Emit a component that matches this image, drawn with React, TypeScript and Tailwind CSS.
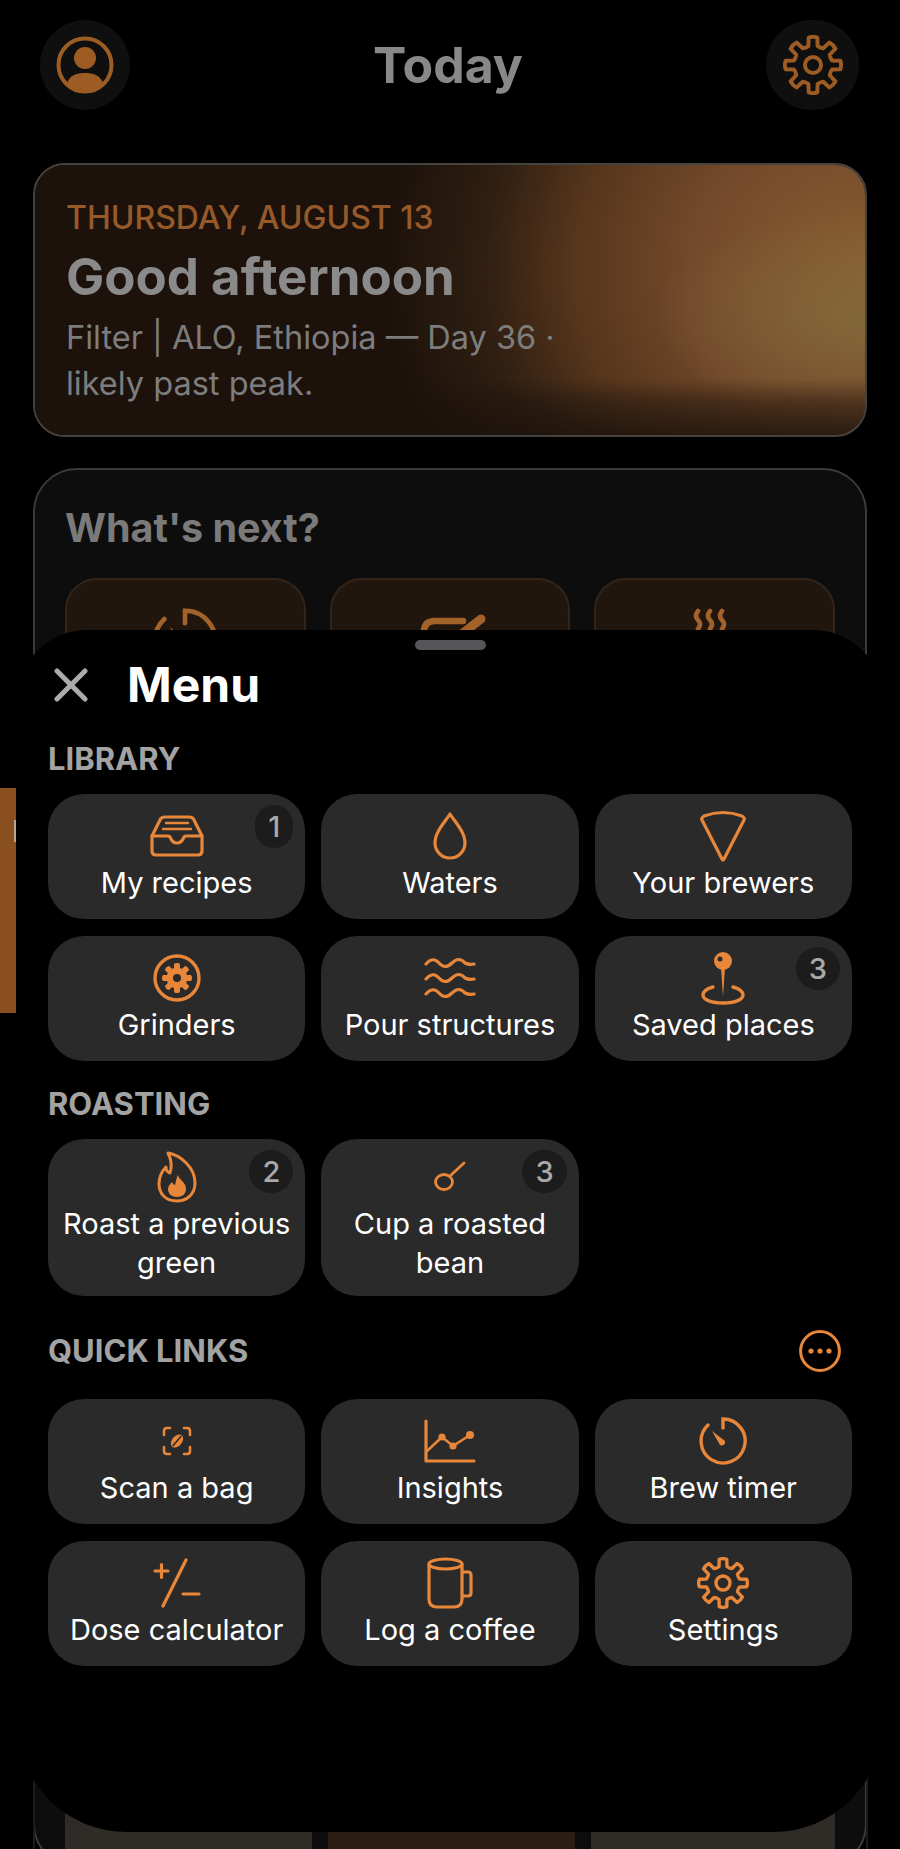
import React from 'react';

const ORANGE = '#e8873a';

// cog outline shared by the header and the Settings tile
const gearPath = (c: number, outer: number, inner: number, teeth: number) => {
  const pts: string[] = [];
  const step = (Math.PI * 2) / teeth;
  const at = (r: number, a: number) => `${(c + r * Math.sin(a)).toFixed(2)} ${(c - r * Math.cos(a)).toFixed(2)}`;
  for (let i = 0; i < teeth; i++) {
    const a = i * step;
    const w = step * 0.2;
    const v = step * 0.3;
    pts.push(`${i === 0 ? 'M' : 'L'}${at(inner, a - v)}`);
    pts.push(`L${at(outer, a - w)}`);
    pts.push(`Q${at(outer + 1, a)} ${at(outer, a + w)}`);
    pts.push(`L${at(inner, a + v)}`);
    pts.push(`Q${at(inner - 1, a + step / 2)} ${at(inner, a + step - v)}`);
  }
  return pts.join(' ') + 'Z';
};

const Gear = ({ color = ORANGE, size = 52 }: { color?: string; size?: number }) => (
  <svg width={size} height={size} viewBox="0 0 52 52" fill="none" stroke={color} strokeWidth="3.4" strokeLinejoin="round">
    <path d={gearPath(26, 24, 17, 8)} />
    <circle cx="26" cy="26" r="7" />
  </svg>
);

const Inbox = () => (
  <svg width="56" height="42" viewBox="0 0 56 42" fill="none" stroke={ORANGE} strokeWidth="3.2" strokeLinejoin="round" strokeLinecap="round">
    <path d="M3 21 L11 5 Q12 2 16 2 H40 Q44 2 45 5 L53 21 V36 Q53 40 49 40 H7 Q3 40 3 36Z" />
    <path d="M3 21 H19 Q21 21 22 24 Q24 28 28 28 Q32 28 34 24 Q35 21 37 21 H53" />
    <path d="M17 8 H39 M14 14 H42" strokeWidth="2.4" />
  </svg>
);

const Drop = () => (
  <svg width="34" height="48" viewBox="0 0 34 48" fill="none" stroke={ORANGE} strokeWidth="3.2" strokeLinejoin="round">
    <path d="M17 2 C12 10 2 20 2 31 A15 15 0 0 0 32 31 C32 20 22 10 17 2Z" />
  </svg>
);

const Cone = () => (
  <svg width="48" height="52" viewBox="0 0 48 52" fill="none" stroke={ORANGE} strokeWidth="3.2" strokeLinejoin="round">
    <path d="M3 10 Q2 8 5 6 Q24 -1 43 6 Q46 8 45 10 L25 49 Q24 51 23 49Z" />
  </svg>
);

const Waves = () => (
  <svg width="52" height="42" viewBox="0 0 52 42" fill="none" stroke={ORANGE} strokeWidth="3.2" strokeLinecap="round">
    <path d="M2 7 Q9 -1 15 6 T28 6 T41 6 Q45 8 50 7" />
    <path d="M2 22 Q9 14 15 21 T28 21 T41 21 Q45 23 50 22" />
    <path d="M2 37 Q9 29 15 36 T28 36 T41 36 Q45 38 50 37" />
  </svg>
);

const Pin = () => (
  <svg width="46" height="54" viewBox="0 0 46 54" fill="none">
    <path d="M13 36 C6 38 3 41 3 44 C3 49 12 52 23 52 C34 52 43 49 43 44 C43 41 40 38 33 36" stroke={ORANGE} strokeWidth="3.4" strokeLinecap="round" />
    <path d="M21 16 L23 46 L25 16Z" fill={ORANGE} />
    <circle cx="23" cy="10" r="9" fill={ORANGE} />
    <circle cx="20" cy="8" r="2.5" fill="#2a2a2a" />
  </svg>
);

const Grinder = () => (
  <svg width="48" height="48" viewBox="0 0 48 48" fill="none">
    <circle cx="24" cy="24" r="22" stroke={ORANGE} strokeWidth="3.4" />
    <path d={gearPath(24, 14, 10, 8)} fill={ORANGE} stroke={ORANGE} strokeWidth="1.4" strokeLinejoin="round" />
    <circle cx="24" cy="24" r="4" fill="#2a2a2a" />
  </svg>
);

const Flame = () => (
  <svg width="42" height="52" viewBox="0 0 42 52" fill="none">
    <path d="M12 2 C24 4 39 16 39 32 C39 43 31 50 21 50 C10 50 3 43 3 33 C3 26 6 20 10 16 C10 19 11 21 14 22 C16 16 15 8 12 2Z" stroke={ORANGE} strokeWidth="3" strokeLinejoin="round" />
    <path d="M22 24 C23 29 30 31 30 38 C30 43 26 46 21 46 C16 46 12 43 12 38 C12 35 14 33 16 31 C17 33 18 34 19 34 C20 31 20 27 22 24Z" fill={ORANGE} />
  </svg>
);

const Spoon = () => (
  <svg width="34" height="32" viewBox="0 0 34 32" fill="none" stroke={ORANGE} strokeWidth="2.8" strokeLinecap="round">
    <ellipse cx="11" cy="21" rx="8.5" ry="7.5" />
    <path d="M17 15 L31 2" />
  </svg>
);

const Scan = () => (
  <svg width="30" height="30" viewBox="0 0 30 30" fill="none" stroke={ORANGE} strokeWidth="2.6" strokeLinecap="round">
    <path d="M2 9 V5 Q2 2 5 2 H8 M22 2 H25 Q28 2 28 5 V9 M28 21 V25 Q28 28 25 28 H22 M8 28 H5 Q2 28 2 25 V21" />
    <g transform="rotate(40 15 15)">
      <ellipse cx="15" cy="15" rx="5" ry="7.5" fill={ORANGE} stroke="none" />
      <path d="M15 9 V21" stroke="#2a2a2a" strokeWidth="1.6" />
    </g>
  </svg>
);

const Chart = () => (
  <svg width="52" height="44" viewBox="0 0 52 44" fill="none" stroke={ORANGE} strokeWidth="3.2" strokeLinecap="round" strokeLinejoin="round">
    <path d="M2 2 V42 H50" />
    <path d="M3 32 L18 18 L29 27 L46 16" strokeWidth="2.6" />
    <circle cx="18" cy="18" r="3.6" fill={ORANGE} stroke="none" />
    <circle cx="29" cy="27" r="3.6" fill={ORANGE} stroke="none" />
    <circle cx="46" cy="16" r="4" fill={ORANGE} stroke="none" />
  </svg>
);

const Timer = ({ color = ORANGE, size = 48 }: { color?: string; size?: number }) => (
  <svg width={size} height={size} viewBox="0 0 48 48" fill="none" stroke={color} strokeWidth="3.4" strokeLinecap="round">
    <path d="M24 11 V2 A22 22 0 1 1 9 8" />
    <path d="M13 14 L26 24 A3.4 3.4 0 0 1 21 28Z" fill={color} stroke="none" />
  </svg>
);

const PlusMinus = () => (
  <svg width="48" height="50" viewBox="0 0 48 50" fill="none" stroke={ORANGE} strokeWidth="3.2" strokeLinecap="round">
    <path d="M2 13 H15 M8.5 6.5 V19.5" />
    <path d="M33 2 L10 48" />
    <path d="M30 36 H46" />
  </svg>
);

const Mug = () => (
  <svg width="46" height="52" viewBox="0 0 46 52" fill="none" stroke={ORANGE} strokeWidth="3.2" strokeLinejoin="round">
    <path d="M2 7 V42 Q2 50 10 50 H27 Q35 50 35 42 V7" />
    <ellipse cx="18.5" cy="7" rx="16.5" ry="5" />
    <path d="M35 15 H41 Q44 15 44 18 V36 Q44 39 41 39 H35" />
  </svg>
);

const Tile = ({ label, badge, icon, tall }: { label: string; badge?: number; icon: React.ReactNode; tall?: boolean }) => (
  <div className={`relative flex flex-col items-center rounded-[36px] bg-[#2a2a2a] ${tall ? 'h-[157px] pt-3' : 'h-[125px] pt-4'}`}>
    <div className="flex h-[52px] items-center justify-center">{icon}</div>
    <div className="mt-[1px] px-1 text-center text-[29px] leading-[39px] text-white">{label}</div>
    {badge !== undefined && (
      <span className="absolute right-3 top-[11px] flex h-[43px] items-center rounded-full bg-[#1c1c1c] px-[13px] text-[29px] font-medium text-[#a9a9a9]">
        {badge}
      </span>
    )}
  </div>
);

const SectionTitle = ({ children }: { children: React.ReactNode }) => (
  <h3 className="text-[31px] font-bold leading-[36px] text-[#a3a3a3]">{children}</h3>
);

export default function App() {
  return (
    <div className="relative h-[1849px] w-[900px] overflow-hidden bg-black font-['Inter',sans-serif]">
      {/* Today screen, dimmed behind the sheet */}
      <div className="flex items-center justify-between pl-10 pr-[41px] pt-5">
        <div className="flex h-[90px] w-[90px] items-center justify-center rounded-full bg-[#0f0f0f]">
          <svg width="58" height="58" viewBox="0 0 58 58" fill="none">
            <circle cx="29" cy="29" r="26.5" stroke="#9c5c24" strokeWidth="4" />
            <circle cx="29" cy="22" r="11" fill="#9c5c24" />
            <path d="M11 47 C14 39 21 37 29 37 C37 37 44 39 47 47 C42 52 36 55 29 55 C22 55 16 52 11 47Z" fill="#9c5c24" />
          </svg>
        </div>
        <h1 className="text-[50px] font-bold text-[#888888]">Today</h1>
        <div className="flex h-[90px] w-[93px] items-center justify-center rounded-full bg-[#0f0f0f]">
          <Gear color="#9c5c24" size={60} />
        </div>
      </div>

      <section className="relative mx-[33px] mt-[53px] h-[274px] overflow-hidden rounded-[32px] border-2 border-[#454340] bg-[#1c120b] px-[31px] pt-[34px]">
        <div className="absolute inset-0 bg-[radial-gradient(ellipse_480px_420px_at_100%_38%,#8a5c30_0%,#72492a_37%,#55351c_61%,#2f1e11_80%,#1c120b_100%)]" />
        <div className="absolute inset-0 bg-[radial-gradient(ellipse_210px_110px_at_100%_56%,rgba(130,108,60,0.8),transparent)]" />
        <div className="absolute inset-x-0 bottom-0 h-[56px] bg-[linear-gradient(to_top,rgba(28,18,11,0.82),rgba(28,18,11,0.45)_60%,transparent)]" />
        <div className="relative">
          <p className="text-[32px] font-medium leading-[38px] text-[#96592a]">THURSDAY, AUGUST 13</p>
          <p className="mt-[5px] text-[51px] font-bold leading-[70px] text-[#8a8a8a]">Good afternoon</p>
          <p className="mt-[3px] w-[520px] text-[32.5px] leading-[46px] text-[#7d7d7d]">Filter | ALO, Ethiopia — Day 36 · likely past peak.</p>
        </div>
      </section>

      <section className="mx-[33px] mt-[31px] h-[1400px] rounded-[44px] border-2 border-[#3a3a3a] bg-[#0d0d0d] px-[30px] pt-[32px]">
        <h2 className="text-[39.5px] font-bold leading-[52px] text-[#7a7a7a]">What's next?</h2>
        <div className="mt-[24px] grid grid-cols-3 gap-[24px]">
          <div className="flex h-[200px] justify-center rounded-[32px] border-2 border-[#33241a] bg-[#21160e] pt-7">
            <Timer color="#a3622a" size={66} />
          </div>
          <div className="flex h-[200px] justify-center rounded-[32px] border-2 border-[#33241a] bg-[#21160e] pl-[8px] pt-[32px]">
            <svg width="70" height="60" viewBox="0 0 70 60" fill="none" stroke="#a3622a" strokeLinecap="round">
              <path d="M44 9 H16 Q5 9 5 20 V50" strokeWidth="6.5" />
              <path d="M44 21 L62 7" strokeWidth="9" />
            </svg>
          </div>
          <div className="flex h-[200px] justify-center rounded-[32px] border-2 border-[#33241a] bg-[#21160e] pr-[10px] pt-[28px]">
            <svg width="64" height="60" viewBox="0 0 64 60" fill="none" stroke="#a3622a" strokeWidth="4.6" strokeLinecap="round">
              <path d="M20 3 Q16 8 20 12 T20 21 M32 3 Q28 8 32 12 T32 21 M44 3 Q40 8 44 12 T44 21" />
              <path d="M10 27 H54 V50 H10Z" fill="#a3622a" />
            </svg>
          </div>
        </div>
      </section>

      {/* what peeks out under the sheet */}
      <div className="absolute left-[65px] top-[1780px] grid h-[80px] w-[770px] grid-cols-[247px_247px_244px] gap-4">
        <div className="bg-[#2f2c27]" />
        <div className="bg-[#2a1d12]" />
        <div className="bg-[#2f2c27]" />
      </div>
      {/* card border fades out near the bottom */}
      <div className="absolute left-[33px] top-[1760px] h-[90px] w-[2px] bg-[#1c1c1c]" />
      <div className="absolute left-[866px] top-[1760px] h-[90px] w-[2px] bg-[#1c1c1c]" />

      {/* edge of the page behind, on the left */}
      <div className="absolute left-0 top-[788px] h-[225px] w-4 bg-[#8a4f1e]">
        <div className="ml-[14px] mt-[32px] h-[22px] w-[2px] bg-[#b9a58f]" />
      </div>

      {/* Menu sheet */}
      <div className="absolute bottom-[17px] left-[17px] right-[17px] top-[630px] rounded-b-[110px] rounded-t-[70px] bg-black px-[31px]">
        <div className="mx-auto mt-[10px] h-[10px] w-[71px] rounded-full bg-[#55555a]" />
        <div className="mt-[10px] flex h-[50px] items-center">
          <svg className="ml-[6px]" width="34" height="34" viewBox="0 0 34 34" fill="none" stroke="#ababab" strokeWidth="5" strokeLinecap="round">
            <path d="M3 3 L31 31 M31 3 L3 31" />
          </svg>
          <h2 className="ml-[39px] text-[48px] font-bold text-white">Menu</h2>
        </div>

        <div className="mt-[31px]">
          <SectionTitle>LIBRARY</SectionTitle>
        </div>
        <div className="mt-[17px] grid grid-cols-3 gap-x-4 gap-y-[17px]">
          <Tile label="My recipes" badge={1} icon={<Inbox />} />
          <Tile label="Waters" icon={<Drop />} />
          <Tile label="Your brewers" icon={<Cone />} />
          <Tile label="Grinders" icon={<Grinder />} />
          <Tile label="Pour structures" icon={<Waves />} />
          <Tile label="Saved places" badge={3} icon={<Pin />} />
        </div>

        <div className="mt-[25px]">
          <SectionTitle>ROASTING</SectionTitle>
        </div>
        <div className="mt-[17px] grid grid-cols-3 gap-x-4">
          <Tile tall label="Roast a previous green" badge={2} icon={<Flame />} />
          <Tile tall label="Cup a roasted bean" badge={3} icon={<Spoon />} />
        </div>

        <div className="mt-[34px] flex items-center justify-between pr-[11px]">
          <SectionTitle>QUICK LINKS</SectionTitle>
          <svg width="42" height="42" viewBox="0 0 42 42" fill="none">
            <circle cx="21" cy="21" r="19.4" stroke={ORANGE} strokeWidth="3" />
            <circle cx="12" cy="21" r="2.6" fill={ORANGE} />
            <circle cx="21" cy="21" r="2.6" fill={ORANGE} />
            <circle cx="30" cy="21" r="2.6" fill={ORANGE} />
          </svg>
        </div>
        <div className="mt-[27px] grid grid-cols-3 gap-x-4 gap-y-[17px]">
          <Tile label="Scan a bag" icon={<Scan />} />
          <Tile label="Insights" icon={<Chart />} />
          <Tile label="Brew timer" icon={<Timer />} />
          <Tile label="Dose calculator" icon={<PlusMinus />} />
          <Tile label="Log a coffee" icon={<Mug />} />
          <Tile label="Settings" icon={<Gear />} />
        </div>
      </div>
    </div>
  );
}
